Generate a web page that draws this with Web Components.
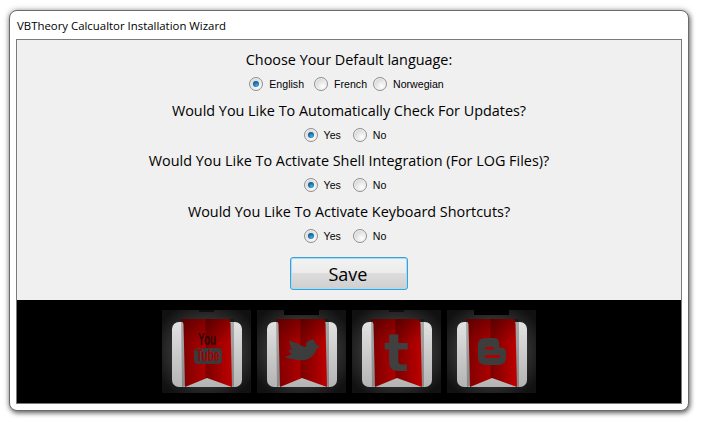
<!DOCTYPE html>
<html>
<head>
<meta charset="utf-8">
<title>VBTheory Calcualtor Installation Wizard</title>
<style>
  html, body { margin: 0; background: #fff; }
  body { width: 702px; height: 424px; overflow: hidden; font-family: "Open Sans", "Noto Sans", sans-serif; }
</style>
</head>
<body>
<wizard-window heading="VBTheory Calcualtor Installation Wizard">
  <wizard-question text="Choose Your Default language:">
    <wizard-radio checked style="margin-left:1px">English</wizard-radio>
    <wizard-radio style="margin-left:4px">French</wizard-radio>
    <wizard-radio>Norwegian</wizard-radio>
  </wizard-question>
  <wizard-question text="Would You Like To Automatically Check For Updates?">
    <wizard-radio checked>Yes</wizard-radio>
    <wizard-radio style="margin:0 2px 0 6px">No</wizard-radio>
  </wizard-question>
  <wizard-question text="Would You Like To Activate Shell Integration (For LOG Files)?">
    <wizard-radio checked>Yes</wizard-radio>
    <wizard-radio style="margin:0 2px 0 6px">No</wizard-radio>
  </wizard-question>
  <wizard-question text="Would You Like To Activate Keyboard Shortcuts?">
    <wizard-radio checked>Yes</wizard-radio>
    <wizard-radio style="margin:0 2px 0 6px">No</wizard-radio>
  </wizard-question>
  <wizard-button>Save</wizard-button>
  <social-bar slot="footer">
    <social-tile kind="youtube"></social-tile>
    <social-tile kind="twitter" tab></social-tile>
    <social-tile kind="tumblr"></social-tile>
    <social-tile kind="blogger" tab></social-tile>
  </social-bar>
</wizard-window>

<script>
class WizardWindow extends HTMLElement {
  constructor() {
    super()
    this.attachShadow({ mode: 'open' })
  }

  connectedCallback() {
    this.shadowRoot.innerHTML = `
      <style>
        :host {
          display: flex;
          flex-direction: column;
          box-sizing: border-box;
          width: 680px;
          height: 401px;
          margin: 10px 0 0 9px;
          padding: 0 6px 6px 6px;
          background: #fff;
          border: 1px solid #6b6b6b;
          border-radius: 8px;
          box-shadow: 1px 2px 5px rgba(0,0,0,.55), 0 0 6px rgba(0,0,0,.25);
        }
        #title {
          height: 28px;
          line-height: 29px;
          padding-left: 1px;
          font-size: 11.4px;
          color: #000;
          white-space: nowrap;
        }
        #panel {
          flex: 1;
          display: flex;
          flex-direction: column;
          border: 1px solid #7a7a7a;
          min-height: 0;
        }
        #main {
          height: 260px;
          background: #f0f0f0;
          display: flex;
          flex-direction: column;
          align-items: center;
          padding-top: 9px;
          box-sizing: border-box;
        }
      </style>
      <div id="title">${this.getAttribute('heading')}</div>
      <div id="panel">
        <div id="main"><slot></slot></div>
        <slot name="footer"></slot>
      </div>`
  }
}

class WizardQuestion extends HTMLElement {
  constructor() {
    super()
    this.attachShadow({ mode: 'open' })
  }

  connectedCallback() {
    this.shadowRoot.innerHTML = `
      <style>
        :host {
          display: flex;
          flex-direction: column;
          align-items: center;
          height: 50.7px;
        }
        #text {
          font-size: 14.4px;
          line-height: 22px;
          color: #000;
          white-space: nowrap;
        }
        #options {
          display: flex;
          margin: 3px 6px 0 0;
          height: 20px;
          align-items: center;
        }
      </style>
      <div id="text">${this.getAttribute('text')}</div>
      <div id="options"><slot></slot></div>`
  }
}

class WizardRadio extends HTMLElement {
  constructor() {
    super()
    this.attachShadow({ mode: 'open' })
  }

  connectedCallback() {
    this.shadowRoot.innerHTML = `
      <style>
        :host {
          display: inline-flex;
          align-items: center;
          font-family: "Liberation Sans", sans-serif;
          font-size: 10.6px;
          color: #000;
          padding: 0 3px;
        }
        #dot {
          width: 12px;
          height: 12px;
          margin-right: 6px;
          border-radius: 50%;
          border: 1px solid #8e8f8f;
          background: radial-gradient(circle at 65% 70%, #fff 0, #e6e6e6 45%, #c4c4c4 100%);
          box-shadow: inset 0 0 0 1px #f4f4f4;
          position: relative;
        }
        :host([checked]) #dot::after {
          content: '';
          position: absolute;
          left: 3px;
          top: 3px;
          width: 6px;
          height: 6px;
          border-radius: 50%;
          background: radial-gradient(circle at 60% 70%, #3fb0e8 0, #1a6ea8 50%, #0b3f66 100%);
        }
      </style>
      <span id="dot"></span><slot></slot>`
  }
}

class WizardButton extends HTMLElement {
  constructor() {
    super()
    this.attachShadow({ mode: 'open' })
  }

  connectedCallback() {
    this.shadowRoot.innerHTML = `
      <style>
        :host {
          display: flex;
          align-items: center;
          justify-content: center;
          box-sizing: border-box;
          width: 118px;
          height: 33px;
          margin-top: 5px;
          padding: 1px 2px 0 0;
          border: 1px solid #3ca1d6;
          border-radius: 3px;
          box-shadow: inset 0 0 0 1px #a5dbf3;
          background: linear-gradient(#f3f3f3 0, #ebebeb 48%, #dcdcdc 50%, #cfcfcf 100%);
          font-size: 18px;
          color: #000;
        }
      </style>
      <slot></slot>`
  }
}

class SocialBar extends HTMLElement {
  constructor() {
    super()
    this.attachShadow({ mode: 'open' })
  }

  connectedCallback() {
    this.shadowRoot.innerHTML = `
      <style>
        :host {
          flex: 1;
          display: flex;
          justify-content: center;
          gap: 5px;
          padding: 10px 0 0 1px;
          background: #000;
        }
      </style>
      <slot></slot>`
  }
}

/* Glyph of each network, drawn in the tile's 89x83 box */
const SOCIAL_MARKS = {
  youtube: `
    <text x="45" y="35" text-anchor="middle" font-family="Liberation Sans, sans-serif" font-weight="bold" font-size="16" textLength="18" lengthAdjust="spacingAndGlyphs" fill="#2c0606">You</text>
    <rect x="32" y="38" width="28" height="16" rx="4" fill="#3a3a3a"/>
    <text x="46" y="51" text-anchor="middle" font-family="Liberation Sans, sans-serif" font-weight="bold" font-size="16" textLength="23" lengthAdjust="spacingAndGlyphs" fill="#a80000">Tube</text>`,
  twitter: `
    <path fill="#3d3d3d" d="M32.3 30 Q36 33 39.7 33 Q44 36 49 37 Q49 33 50 32 Q53 29 56.3 29.5 Q58 31 58.5 33.5 L63 37.5 L59.7 38.5 Q59 42 56.3 45 Q53 49 48 50 Q42 51 36.3 49.3 Q31 48.5 27.3 47.3 Q31 46.5 34.7 44.3 Q32 42 31.5 40 L35 39.5 Q32.5 36 32.3 30 Z"/>`,
  tumblr: `
    <text x="44.5" y="61" text-anchor="middle" font-family="DejaVu Sans, sans-serif" font-weight="bold" font-size="52" fill="#404040">t</text>`,
  blogger: `
    <path fill="#3d3d3d" d="M38 28 H47 Q52 28 52 33 V35 Q52 38 55 38 Q59 38 59 42 V47 Q59 55 51 55 H39 Q31 55 31 47 V35 Q31 28 38 28 Z"/>
    <rect x="38" y="37" width="9" height="2.5" rx="1" fill="#b00000"/>
    <rect x="38" y="45" width="15" height="3" rx="1" fill="#b00000"/>`
}

class SocialTile extends HTMLElement {
  constructor() {
    super()
    this.attachShadow({ mode: 'open' })
  }

  connectedCallback() {
    var kind = this.getAttribute('kind')
    var big = this.hasAttribute('tab')
    var tabWidth = big ? 35 : 15
    var tabHeight = big ? 5 : 2
    var tabX = (89 - tabWidth) / 2
    this.shadowRoot.innerHTML = `
      <style>
        :host { display: block; width: 89px; height: 83px; margin-right: 1px; }
        svg { display: block; }
      </style>
      <svg width="89" height="83" viewBox="0 0 89 83">
        <defs>
          <radialGradient id="back-${kind}" cx="50%" cy="50%" r="62%">
            <stop offset="0.5" stop-color="#3a3a3a"/>
            <stop offset="1" stop-color="#111"/>
          </radialGradient>
          <linearGradient id="card-${kind}" x1="0" y1="0" x2="0" y2="1">
            <stop offset="0" stop-color="#e2e2e2"/>
            <stop offset="1" stop-color="#b4b4b4"/>
          </linearGradient>
          <linearGradient id="ribbon-${kind}" x1="0" y1="0" x2="1" y2="0">
            <stop offset="0" stop-color="#7a0000"/>
            <stop offset="0.48" stop-color="#ac0000"/>
            <stop offset="0.5" stop-color="#7c0000"/>
            <stop offset="1" stop-color="#c00000"/>
          </linearGradient>
          <linearGradient id="shade-${kind}" x1="0" y1="0" x2="0" y2="1">
            <stop offset="0" stop-color="#000" stop-opacity=".28"/>
            <stop offset="0.35" stop-color="#000" stop-opacity="0"/>
          </linearGradient>
        </defs>
        <rect width="89" height="83" fill="url(#back-${kind})"/>
        <rect x="${tabX}" y="0" width="${tabWidth}" height="${tabHeight}" fill="#000" opacity="${big ? 1 : .6}"/>
        <rect x="10" y="12" width="70" height="65" rx="7" fill="url(#card-${kind})"/>
        <path d="M19 9 H72 L72 77 L45 67 L20 77 Z" fill="#000" opacity=".25"/>
        <path d="M18 9 H66 Q68 10 68.5 14 L70 77 L45 68 L23 77 L21.5 14 Q21 11 18 9 Z" fill="url(#ribbon-${kind})"/>
        <path d="M18 9 H66 Q68 10 68.5 14 L70 77 L45 68 L23 77 L21.5 14 Q21 11 18 9 Z" fill="url(#shade-${kind})"/>
        ${SOCIAL_MARKS[kind]}
      </svg>`
  }
}

window.customElements.define('wizard-window', WizardWindow)
window.customElements.define('wizard-question', WizardQuestion)
window.customElements.define('wizard-radio', WizardRadio)
window.customElements.define('wizard-button', WizardButton)
window.customElements.define('social-bar', SocialBar)
window.customElements.define('social-tile', SocialTile)
</script>
</body>
</html>
